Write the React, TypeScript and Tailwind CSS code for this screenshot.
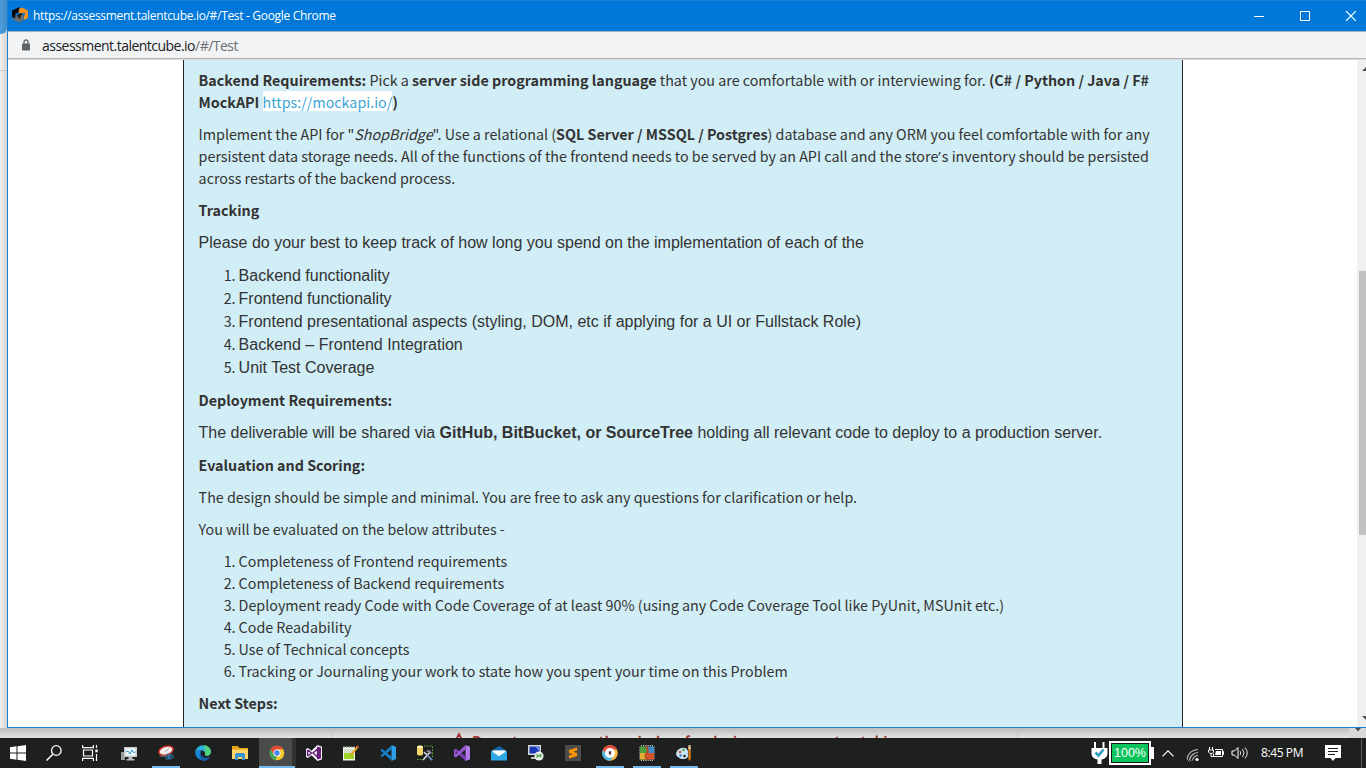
import React from "react";

type Kids = { children?: React.ReactNode };

const Para = ({ children, className = "mb-[10px]" }: Kids & { className?: string }) => (
  <p className={"whitespace-nowrap " + className}>{children}</p>
);

const ARIAL = "font-['Liberation_Sans',sans-serif] text-[16px]";

function NumberedList({ items, arial = false }: { items: string[]; arial?: boolean }) {
  return (
    <ol className={arial ? "mb-[11px]" : "mb-[10px]"}>
      {items.map((t, i) => (
        <li key={t} className={arial ? "flex h-[23px] items-baseline whitespace-nowrap leading-[23px]" : "flex h-[22px] items-baseline whitespace-nowrap"}>
          <span className="w-[37px] shrink-0 text-right">{i + 1}.</span>
          <span className={arial ? "ml-[3px] font-['Liberation_Sans',sans-serif] text-[16px]" : "ml-[3px]"}>{t}</span>
        </li>
      ))}
    </ol>
  );
}

const Svg = ({ children, size = "size-4", box = "0 0 16 16" }: Kids & { size?: string; box?: string }) => (
  <svg viewBox={box} className={size + " shrink-0"} fill="none">{children}</svg>
);

const CubeIcon = () => (
  <Svg>
    <path d="M0 3.500 7 .2l1.500.8-1.500 1V5L3.500 7v4.500L0 10z" fill="#0a0a0a" />
    <path d="M7.500 1.500 10 .5l6 3V11l-4 2V8.500l1-.5V6L8 6.500 6.500 5z" fill="#f5921e" />
    <path d="M3.500 8.500 9 7l2.500 1.500V13L8 15.700.5 12.500v-1.300l3 .3z" fill="#6b6b70" />
    <path d="m5 8 4-2 2 1-3 2.500 1 1.500-2 .5z" fill="#1a1a1a" />
  </Svg>
);

const WindowsIcon = () => (
  <Svg><path d="M0 2.300 6.500 1.300V7.500H0zM7.500 1.200 16 0v7.500H7.500zM0 8.500h6.500v6.200L0 13.700zM7.500 8.500H16V16l-8.500-1.200z" fill="#fff" /></Svg>
);
const SearchIcon = () => (
  <Svg><circle cx="10.300" cy="5.500" r="4.800" stroke="#fff" strokeWidth="1.300" /><path d="M6.800 9.200.5 15.600" stroke="#fff" strokeWidth="1.400" /></Svg>
);
const TaskViewIcon = () => (
  <Svg><path d="M.6 0v2.600h10.800V0M.6 16v-2.600h10.800V16M1.500 5h9v6h-9zM14.500 0v3M14.500 9v7" stroke="#fff" strokeWidth="1.200" /><path d="M13.300 4.500h2.400v2.800h-2.400z" fill="#fff" /></Svg>
);
const MonitorIcon = () => (
  <Svg><path d="M0 7h4v8H0z" fill="#9a9d9d" /><path d="M3 2h13v10H3z" fill="#c9cdcc" /><path d="M4.500 3.500h10v7h-10z" fill="#f4fafc" /><path d="m5 7 2-1 2 3 2-4 1.500 2.500 2-.5" stroke="#2a94c8" /><path d="M7.500 12h4v2h2v1.500h-8V14h2z" fill="#b9bcbc" /></Svg>
);
const SnipIcon = () => (
  <Svg><ellipse cx="8" cy="5.600" rx="7.300" ry="4.200" transform="rotate(-17 8 5.600)" fill="#f6f1f0" stroke="#c9302e" strokeWidth="1.500" /><path d="m6.500 7 5-4" stroke="#a9a9a9" /><path d="M1.500 11h7" stroke="#8f8080" /><path d="M9 8.500 12.500 15M13 8.500 10 13" stroke="#2b7fb5" strokeWidth="1.300" /><circle cx="9.300" cy="13" r="1.400" stroke="#2b7fb5" /><circle cx="14" cy="11.500" r="1.400" stroke="#2b7fb5" /></Svg>
);
const EdgeIcon = () => (
  <Svg>
    <path d="M.2 8A7.800 7.800 0 0 1 8 .2c4.500 0 8 3 8 6.600 0 2.400-1.700 3.900-4 3.900-1.900 0-2.700-.8-2.200-1.700C10.800 6.500 7 4.500 4 5.500 1.500 6.300.4 7 .2 8z" fill="#2db3dc" />
    <path d="M9 .3c4 .2 7 3 7 6.500 0 2.400-1.700 3.900-4 3.900-1.900 0-2.700-.8-2.200-1.700 1.200-3-.6-7-.8-8.700z" fill="#4fcf78" />
    <path d="M.2 7.500C1 5 4 4.300 6.500 5c-2 2-1.300 6.500 2.500 7.700 2 .6 4 .3 5.700-.8A8 8 0 0 1 .2 7.500z" fill="#1b85d8" />
    <path d="M6.200 7c-1.600 3.500 3 7.700 8.500 4.900A7.500 7.500 0 0 1 8 16C4.500 14 3.500 9.500 6.200 7z" fill="#0f5ca8" />
    <path d="M7 7.500c1-1 2.800-.8 3 .5 0 .8-1 1.500 0 2.300l-1 1C7.500 10.500 6.500 9 7 7.500z" fill="#1e1f1f" />
  </Svg>
);
const FolderIcon = () => (
  <Svg><path d="M0 1h6l1.500 2H16v11H0z" fill="#e8a416" /><path d="M0 4.500h16V14H0z" fill="#fcd667" /><path d="M3 9.500 4 8h8l1 1.500V15h-3v-3H6v3H3z" fill="#3c93d2" /></Svg>
);
const ChromeIcon = () => (
  <Svg><circle cx="8" cy="8" r="7.300" fill="#f7c928" /><path d="M8 .7a7.300 7.300 0 0 1 6.300 3.600H8L4.600 9.900 1.500 4.700A7.300 7.300 0 0 1 8 .7z" fill="#e2483c" /><path d="M1.600 4.500 4.700 9.900 8 11.700l-1.300 3.500A7.300 7.300 0 0 1 1.600 4.500z" fill="#3ba757" /><circle cx="8" cy="8" r="3.600" fill="#fff" /><circle cx="8" cy="8" r="2.700" fill="#4385f0" /></Svg>
);
const VsOldIcon = () => (
  <Svg><path d="M0 4 2 3l3.500 2.800L11.500 0 16 1.800v12.400L11.500 16 5.500 10.200 2 13l-2-1z" fill="#fff" /><path d="M1.600 4.800v6.400M2 5l3.500 3L2 11M7 8l4.500 4V4z" stroke="#68217a" strokeWidth="1.500" /><path d="m11 1.500 4 1v11l-4 1z" fill="#68217a" /></Svg>
);
const NotepadIcon = () => (
  <Svg><path d="M0 2h12v13.500H0z" fill="#f2f5e9" /><path d="M1 8h10v6H1z" fill="#9bd428" /><path d="M1 5h9M1 7h8" stroke="#bac4b0" /><path d="M1 1v2M3.500 1v2M6 1v2M8.500 1v2M11 1v2" stroke="#999" /><path d="m7 11 1-3 6.500-7.500 1.500 1.300L9.500 10z" fill="#e5a32b" /><path d="m14 .5 2 1.500-1 1-2-1.500z" fill="#c53a2e" /></Svg>
);
const CodeIcon = () => (
  <Svg><path d="M11.500 0 16 2v12l-4.500 2z" fill="#2d9fe8" /><path d="m11.500.5.300 3.700L2 12.200.3 10.800zM.3 5.200 2 3.800l9.800 8-.3 3.900z" fill="#177fc4" /></Svg>
);
const ToolsIcon = () => (
  <Svg><path d="M7 1h8.500v12M0 14.500h6" stroke="#67b52a" strokeDasharray="1.500 1.500" /><path d="M0 2c0-2 6-2 6 0v7c0 2-6 2-6 0z" fill="#f3d56a" /><ellipse cx="3" cy="2" rx="3" ry="1.200" fill="#fff3b7" /><path d="m6 15 7-8M7 7l8 8" stroke="#d4d8dc" strokeWidth="1.600" /><path d="m10 10 5 5" stroke="#4c79ae" strokeWidth="1.500" /><path d="m9 6 3-1 3 3-1 1z" fill="#8b9299" /></Svg>
);
const VsIcon = () => (
  <Svg><path d="M11.500 0 16 1.800v12.400L11.500 16z" fill="#b47be8" /><path d="M0 4.500 2 3.500l10 8.300-.5 4.200L1.500 6.500v3L0 11.500z" fill="#7a3fb8" /><path d="M0 11.500v-7l1.500 1v4L11.500 0v4.500L2 12.500z" fill="#9458d0" /></Svg>
);
const MailIcon = () => (
  <Svg><path d="M0 6 8 1l8 5v9H0z" fill="#0f65ad" /><path d="M1.500 5.500h13V11h-13z" fill="#fff" /><path d="M0 6l8 5 8-5v9.500H0z" fill="#2fa8e8" /><path d="m2 5.800 6 5.200 6-5.200z" fill="#fff" /></Svg>
);
const RemoteIcon = () => (
  <Svg><path d="M0 0h13v10H0z" fill="#d6d8d6" /><path d="M1.500 1.500h10v7h-10z" fill="#1c35b4" /><path d="m7 1.500 4.500 0v5z" fill="#6d89ea" /><path d="M3 12h7v2H3z" fill="#c8c4b4" /><circle cx="11" cy="11" r="4.600" fill="#e9eee9" /><path d="m8.500 9.500 2 1.500-2 1.500M13.500 9l-2 1.500 2 1.500" stroke="#349b3d" strokeWidth="1.200" /></Svg>
);
const SublimeIcon = () => (
  <Svg><path d="M0 0h16v16H0z" fill="#4b4b4b" /><path d="m4 5 8-2.500v3L8 6.700l4 1.200v3L4 13.500v-3l4-1.300-4-1.200z" fill="#ff9800" /></Svg>
);
const SecureBrowserIcon = () => (
  <Svg><circle cx="8" cy="8" r="7.800" fill="#f4b63d" /><path d="M8 .2a7.800 7.800 0 0 1 7 4.300H8L2 3A7.800 7.800 0 0 1 8 .2z" fill="#df4a3c" /><path d="M1 4.500a7.800 7.800 0 0 0 7 11.300l3-3L5 10z" fill="#4ab9e4" /><path d="M.8 5a7.800 7.800 0 0 1 2-3l3 4-1 3z" fill="#e84b3d" /><circle cx="8" cy="8" r="5" fill="#fff" /><path d="M6.800 6.300h2.400v2L8 10.500 6.800 8.300z" fill="#5a3540" /></Svg>
);
const ChipIcon = () => (
  <Svg><path d="M2 .7h13M2 15.300h13M1 2v12M15 2v12" stroke="#d7d7d2" strokeDasharray="1 1.200" strokeWidth="1.400" /><path d="M1 1.500h7V8H1z" fill="#4f9e42" /><path d="M8 1.500h7V8H8z" fill="#3e8bc6" /><path d="M1 8h7v6.500H1z" fill="#e2ad31" /><path d="M8 8h7v6.500H8z" fill="#d8542d" /><path d="M7 1.500q3 3 1 6.500-3 3 0 6" stroke="#b9461f" strokeWidth="2" /></Svg>
);
const PaintIcon = () => (
  <Svg><path d="M.5 7c1.500-4.500 9-6 11-2 1 2 0 3 .5 5s-1 4-4.500 4C3 14 3.500 12.500 2 12S-.3 9 .5 7z" fill="#c7e5f5" /><circle cx="4" cy="7" r="1.300" fill="#d84a31" /><circle cx="7.500" cy="5" r="1.300" fill="#4ea546" /><circle cx="4.500" cy="10.500" r="1.200" fill="#3676ce" /><circle cx="8.500" cy="11" r="1.300" fill="#1e1f1f" /><path d="M12.500 0h2l.5 4h-3z" fill="#dac088" /><path d="M12.300 4h2.500v10l-1.200 2-1.300-2z" fill="#d27a1f" /></Svg>
);

const apps: { name: string; icon: React.ReactNode; running?: boolean; active?: boolean }[] = [
  { name: "monitor", icon: <MonitorIcon /> },
  { name: "snip", icon: <SnipIcon />, running: true },
  { name: "edge", icon: <EdgeIcon /> },
  { name: "files", icon: <FolderIcon /> },
  { name: "chrome", icon: <ChromeIcon />, active: true },
  { name: "vsold", icon: <VsOldIcon /> },
  { name: "notepad", icon: <NotepadIcon /> },
  { name: "code", icon: <CodeIcon /> },
  { name: "tools", icon: <ToolsIcon /> },
  { name: "vs", icon: <VsIcon /> },
  { name: "mail", icon: <MailIcon /> },
  { name: "remote", icon: <RemoteIcon /> },
  { name: "sublime", icon: <SublimeIcon /> },
  { name: "secure", icon: <SecureBrowserIcon />, running: true },
  { name: "chip", icon: <ChipIcon />, running: true },
  { name: "paint", icon: <PaintIcon />, running: true },
];

function Taskbar() {
  return (
    <div className="flex h-[30px] items-stretch bg-[#1e1f1f] font-['Open_Sans',sans-serif] text-white">
      {[<WindowsIcon key="w" />, <SearchIcon key="s" />, <TaskViewIcon key="t" />].map((ic, i) => (
        <div key={i} className="flex w-9 items-center justify-center">{ic}</div>
      ))}
      <div className="ml-[3px] flex">
        {apps.map((a) => (
          <div key={a.name} className={a.active ? "relative flex w-[37px] items-center bg-linear-to-r from-[#4a4b4b] from-[33px] to-[#303131] to-[33px] pl-[10px]" : "relative flex w-[37px] items-center pl-[10px]"}>
            {a.icon}
            {a.running && <div className="absolute bottom-0 left-1 h-[2px] w-7 bg-[#76b9ed]" />}
            {a.active && <div className="absolute bottom-0 left-0 h-[2px] w-9 bg-[#76b9ed]" />}
          </div>
        ))}
      </div>
      <div className="ml-auto flex items-center">
        <svg viewBox="0 0 17 24" className="h-6 w-[17px]" fill="none">
          <path d="M3 1h2v6h6.500V1h2v6h3v5c0 4-2.500 6-6 6.500V23h-4v-4.500C3 18 .5 16 .5 12V7H3z" fill="#fff" />
          <path d="m4.500 11.500 3 3 5-6" stroke="#2d9cc0" strokeWidth="2.600" />
        </svg>
        <div className="ml-px flex h-6 w-[42px] items-center justify-center border-2 border-white bg-[#16191a] p-px">
          <div className="flex h-full w-full items-center justify-center bg-[#0cc45c] font-['Liberation_Sans',sans-serif] text-[12.500px] leading-none">100%</div>
        </div>
        <div className="h-3 w-[3px] bg-white" />
        <svg viewBox="0 0 12 7" className="ml-2 h-[7px] w-3" fill="none"><path d="m.5 6.300 5.500-5.500 5.500 5.500" stroke="#fff" strokeWidth="1.200" /></svg>
        <svg viewBox="0 0 14 14" className="ml-3 mt-1 h-[14px] w-[14px]" fill="none">
          <path d="M1 11A11 11 0 0 1 12 1.500M3.500 12a9 9 0 0 1 8.500-7.500M6.500 12.500a6 6 0 0 1 5.500-5" stroke="#bfc0c0" strokeWidth="1.100" /><path d="M1 11l2.500 2.500M4 12l1.500 1" stroke="#999" /><circle cx="11" cy="11.500" r="1.600" fill="#fff" />
        </svg>
        <svg viewBox="0 0 16 12" className="ml-2 h-3 w-4" fill="none"><path d="M1.500 0v3M4.500 0v3M.5 3h5v2L4 6.500H2L.5 5zM3 6.500V9.500h3" stroke="#fff" /><path d="M7 2.500h7.500v7H5.500v-3M14.500 4.500h1v3h-1" stroke="#fff" /><path d="M8 4h5v4H7z" fill="#fff" /></svg>
        <svg viewBox="0 0 18 14" className="ml-[7px] h-[14px] w-[18px]" fill="none"><path d="M1 5h2.500L7 1.500v11L3.500 9H1z" stroke="#fff" /><path d="M9 5q1.500 2 0 4M11.500 3q3 4 0 8M14 1.500q4.500 5.500 0 11" stroke="#e4e4e4" /></svg>
        <div className="ml-3 w-[43px] whitespace-nowrap text-[12px] leading-none tracking-[-0.4px]">8:45 PM</div>
        <svg viewBox="0 0 16 16" className="ml-[21px] size-4" fill="none"><path d="M0 0h16v13h-5.500L8 16l-2.500-3H0z" fill="#fff" /><path d="M3 3.500h10M3 6.500h10M3 9.500h7" stroke="#1e1f1f" /></svg>
        <div className="ml-5 h-[30px] w-px bg-[#5a5b5b]" />
        <div className="w-1" />
      </div>
    </div>
  );
}

export default function App() {
  return (
    <div className="flex h-[768px] w-[1366px] flex-col overflow-hidden bg-[#e6e6e6]">
      <div className="flex h-[728px]">
        <div className="flex w-[7px] flex-col bg-linear-to-r from-[#f0f0f0] to-[#d6d6d6]">
          <div className="h-[34px] rounded-br-[6px] bg-linear-to-r from-[#4c9ddd] to-[#3f8bc8]" />
          <div className="mt-9 h-px bg-[#c4c4c4]" />
        </div>
        <div className="flex w-[1359px] flex-col border-b border-l border-[#1c7fd2] bg-white">
          <div className="flex h-[31px] shrink-0 items-center border-t border-[#1c84d8] bg-[#0078d9] pl-1 font-['Open_Sans',sans-serif] text-[12px] text-white">
            <div className="-mt-[2px]"><CubeIcon /></div>
            <span className="ml-[5px] whitespace-nowrap tracking-[-0.32px]">https://assessment.talentcube.io/#/Test - Google Chrome</span>
            <svg viewBox="0 0 102 10" className="ml-auto mr-[10px] h-[10px] w-[102px]" fill="none" stroke="#fff">
              <path d="M0 5.500h10M46.500.5h9v9h-9z" /><path d="m92 0 10 10M102 0 92 10" strokeWidth="1.200" />
            </svg>
          </div>
          <div className="flex h-[28px] shrink-0 items-center border-b border-t border-b-[#b3b3b3] border-t-[#9fb4c6] bg-[#f1f3f4] pl-[14px] font-['Open_Sans',sans-serif] text-[14px] text-[#202124]">
            <svg viewBox="0 0 8 12" className="h-3 w-2" fill="none"><path d="M2 5V3a2 2 0 0 1 4 0v2" stroke="#5f6368" strokeWidth="1.300" /><rect y="4.500" width="8" height="7" rx=".8" fill="#5f6368" /></svg>
            <span className="ml-3 whitespace-nowrap tracking-[-0.52px]">assessment.talentcube.io<span className="text-[#6b6f73]">/#/Test</span></span>
          </div>
          <div className="h-px shrink-0 bg-[#dcdcdc]" />
          <div className="flex min-h-0 flex-1">
            <div className="ml-[175px] w-[1000px] overflow-hidden border-x border-[#222] bg-[#d1edf5] pl-[14.600px] pt-[9px] font-['Noto_Sans_CJK_SC',sans-serif] text-[14.315px] leading-[22px] text-[#333]">
              <Para>
                <b>Backend Requirements:</b> Pick a <b>server side programming language</b> that you are comfortable with or interviewing for. <b>(C# / Python / Java / F#</b><br />
                <b>MockAPI</b> <a className="inline-block h-5 bg-white align-top leading-[22px] text-[#3ba5d1]">https://mockapi.io/</a><b>)</b>
              </Para>
              <Para>
                Implement the API for "<i>ShopBridge</i>". Use a relational (<b>SQL Server / MSSQL / Postgres</b>) database and any ORM you feel comfortable with for any<br />
                persistent data storage needs. All of the functions of the frontend needs to be served by an API call and the store<span className="mr-px font-['Open_Sans'] leading-none">’</span>s inventory should be persisted<br />
                across restarts of the backend process.
              </Para>
              <Para><b>Tracking</b></Para>
              <Para className={ARIAL + " mb-[9px] pt-px"}>Please do your best to keep track of how long you spend on the implementation of each of the</Para>
              <NumberedList arial items={["Backend functionality", "Frontend functionality", "Frontend presentational aspects (styling, DOM, etc if applying for a UI or Fullstack Role)", "Backend – Frontend Integration", "Unit Test Coverage"]} />
              <Para><b>Deployment Requirements:</b></Para>
              <Para className={ARIAL + " mb-[10px] h-[23px] pt-px"}>The deliverable will be shared via <b>GitHub, BitBucket, or SourceTree</b> holding all relevant code to deploy to a production server.</Para>
              <Para><b>Evaluation and Scoring:</b></Para>
              <Para>The design should be simple and minimal. You are free to ask any questions for clarification or help.</Para>
              <Para>You will be evaluated on the below attributes -</Para>
              <NumberedList items={["Completeness of Frontend requirements", "Completeness of Backend requirements", "Deployment ready Code with Code Coverage of at least 90% (using any Code Coverage Tool like PyUnit, MSUnit etc.)", "Code Readability", "Use of Technical concepts", "Tracking or Journaling your work to state how you spent your time on this Problem"]} />
              <Para><b>Next Steps:</b></Para>
            </div>
            <div className="ml-auto flex w-[9px] flex-col items-end bg-[#f0f0f0]">
              <svg viewBox="0 0 4 4" className="mt-[7px] size-1"><path d="M0 4 4 0v4z" fill="#505050" /></svg>
              <div className="mt-[200px] h-[264px] w-[7px] bg-[#c1c1c1]" />
              <svg viewBox="0 0 4 4" className="mb-[7px] mt-auto size-1"><path d="M0 0h4v4z" fill="#505050" /></svg>
            </div>
          </div>
        </div>
      </div>
      <div className="flex h-[10px] overflow-hidden bg-linear-to-b from-[#bcbcbc] to-[#e4e4e4] font-['Noto_Sans_CJK_SC',sans-serif] text-[14.3px] font-bold leading-[22px] text-[#a43a3a]">
        <div className="ml-[331px] flex h-[10px] w-[687px] border-x border-[#c6c6c6]">
          <svg viewBox="0 0 12 12" className="ml-[121px] mt-[5px] h-3 w-3 shrink-0" fill="none"><path d="M6 1 1 11h10z" stroke="#a43a3a" strokeWidth="2" /></svg>
          <span className="ml-[7px] mt-[2px] whitespace-nowrap">Do not move over the window for during assessment<span className="ml-5">taking</span></span>
        </div>
        <div className="ml-auto flex w-[17px] justify-center bg-[#d8d8d8]"><svg viewBox="0 0 6 4" className="h-1 w-[6px]"><path d="M0 0h6L3 3.500z" fill="#505050" /></svg></div>
      </div>
      <Taskbar />
    </div>
  );
}
